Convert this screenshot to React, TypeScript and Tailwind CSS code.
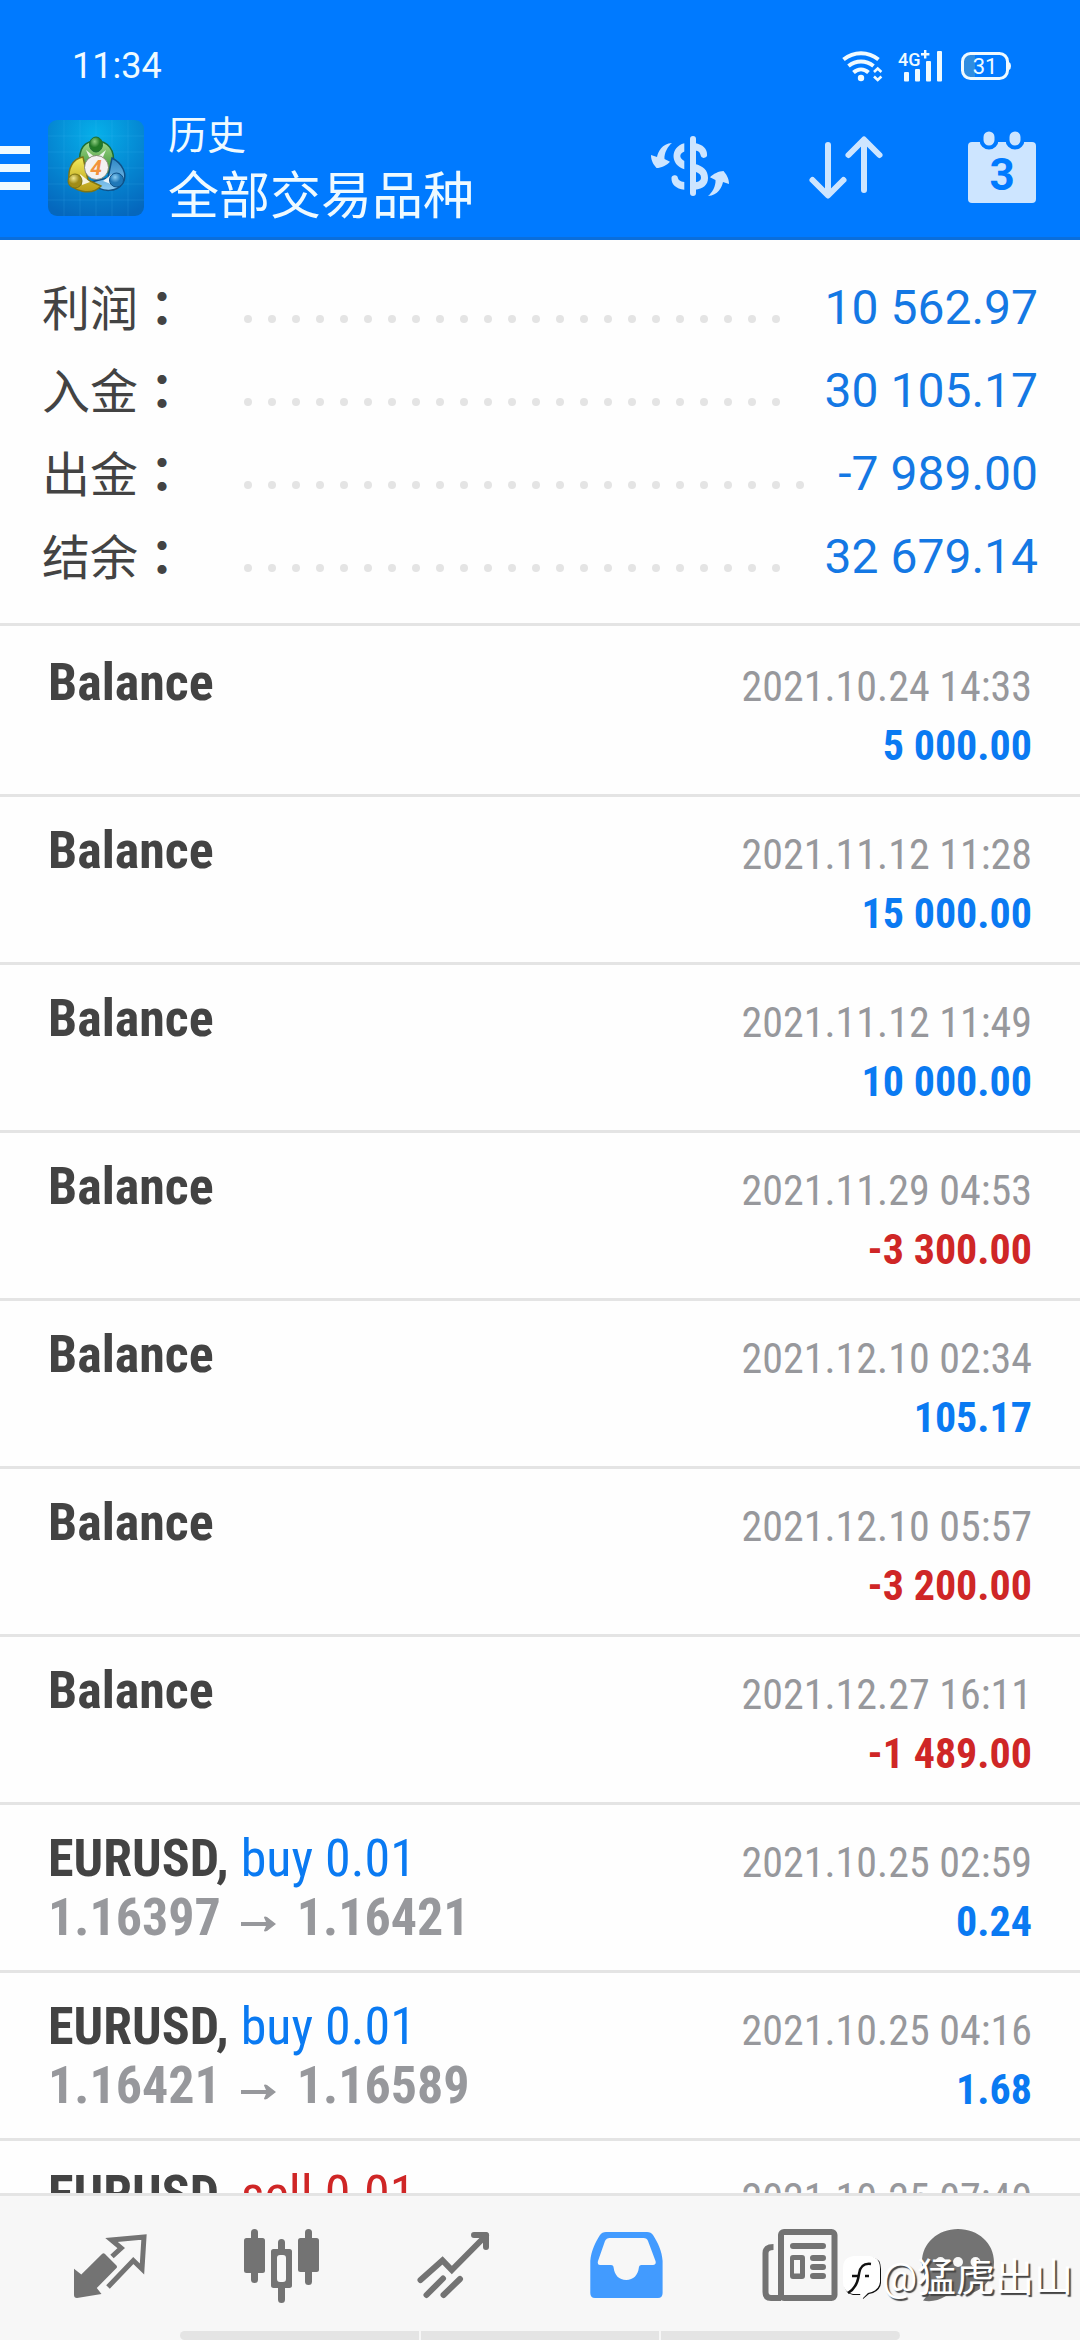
import type { ReactNode } from "react"
import clsx from "clsx"

type HistoryItem = {
  symbol: string
  side?: "buy" | "sell"
  volume?: string
  open?: string
  close?: string
  time: string
  amount: string
}

const summary = [
  { label: "利润", value: "10 562.97" },
  { label: "入金", value: "30 105.17" },
  { label: "出金", value: "-7 989.00" },
  { label: "结余", value: "32 679.14" },
]

const history: HistoryItem[] = [
  { symbol: "Balance", time: "2021.10.24 14:33", amount: "5 000.00" },
  { symbol: "Balance", time: "2021.11.12 11:28", amount: "15 000.00" },
  { symbol: "Balance", time: "2021.11.12 11:49", amount: "10 000.00" },
  { symbol: "Balance", time: "2021.11.29 04:53", amount: "-3 300.00" },
  { symbol: "Balance", time: "2021.12.10 02:34", amount: "105.17" },
  { symbol: "Balance", time: "2021.12.10 05:57", amount: "-3 200.00" },
  { symbol: "Balance", time: "2021.12.27 16:11", amount: "-1 489.00" },
  { symbol: "EURUSD", side: "buy", volume: "0.01", open: "1.16397", close: "1.16421", time: "2021.10.25 02:59", amount: "0.24" },
  { symbol: "EURUSD", side: "buy", volume: "0.01", open: "1.16421", close: "1.16589", time: "2021.10.25 04:16", amount: "1.68" },
  { symbol: "EURUSD", side: "sell", volume: "0.01", time: "2021.10.25 07:40", amount: "" },
]

const StatusBar = () => (
  <div className="flex h-[99px] items-center justify-between pt-[33px] pr-[69px] pl-[72px] text-[#effaff]">
    <span className="text-[36px] leading-none">11:34</span>
    <div className="flex items-center">
      <svg className="h-8 w-[42px]" viewBox="0 0 42 32" fill="none" stroke="currentColor" strokeWidth="4">
        <path d="M1.5 9.5C12 1 26 1 36.5 9.5" />
        <path d="M6.5 16C14 10 24 10 31.5 16" />
        <path d="M11.5 22.5C16 18.5 22 18.5 26.5 22.5" />
        <circle cx="19" cy="28" r="3.2" fill="currentColor" stroke="none" />
        <path d="M32 22L35.7 18.5L39.4 22M32 26.5L35.7 30L39.4 26.5" strokeWidth="2.6" />
      </svg>
      <svg className="ml-[14px] h-10 w-[45px]" viewBox="0 -4 45 40" fill="currentColor">
        <text x="0" y="15.500" fontSize="18" fontFamily="Roboto, sans-serif" fontWeight="500">4G</text>
        <path d="M26 0h2.4v3h3v2.4h-3v3H26v-3h-3V3h3z" />
        <rect x="6" y="22" width="5" height="9.5" rx="1" />
        <rect x="17" y="19" width="5" height="12.5" rx="1" />
        <rect x="28" y="11" width="5" height="20.5" rx="1" />
        <rect x="39" y="1" width="5" height="30.5" rx="1" />
      </svg>
      <svg className="ml-[18px] h-7 w-[50px]" viewBox="0 0 50 28">
        <path d="M9 2H14V26H9Q2 26 2 19V9Q2 2 9 2Z" fill="#2f8de0" />
        <rect x="1.5" y="1.5" width="45" height="25" rx="8" fill="none" stroke="currentColor" strokeWidth="3" />
        <path d="M48 10q2 1 2 4t-2 4z" fill="currentColor" />
        <text x="24" y="21.5" textAnchor="middle" fontSize="22" fontFamily="Roboto, sans-serif" fill="currentColor">31</text>
      </svg>
    </div>
  </div>
)

const AppLogo = () => (
  <svg className="h-24 w-24 shrink-0" viewBox="0 0 96 96">
    <defs>
      <radialGradient id="sky" cx=".5" cy=".15" r=".9">
        <stop offset="0" stopColor="#06b0ea" />
        <stop offset=".55" stopColor="#0587d2" />
        <stop offset="1" stopColor="#0567bd" />
      </radialGradient>
      <linearGradient id="green" x2="0" y2="1">
        <stop offset="0" stopColor="#a4d98b" />
        <stop offset="1" stopColor="#2f8c2c" />
      </linearGradient>
      <linearGradient id="yellow" x2="0" y2="1">
        <stop offset="0" stopColor="#f3ec5c" />
        <stop offset="1" stopColor="#b79b16" />
      </linearGradient>
      <linearGradient id="blue" x2="0" y2="1">
        <stop offset="0" stopColor="#2d86c4" />
        <stop offset="1" stopColor="#8ccbf2" />
      </linearGradient>
      <radialGradient id="greenHead" cx=".4" cy=".3">
        <stop offset="0" stopColor="#8fce80" />
        <stop offset=".8" stopColor="#237a26" />
      </radialGradient>
      <radialGradient id="yellowHead" cx=".4" cy=".3">
        <stop offset="0" stopColor="#f1e990" />
        <stop offset=".8" stopColor="#a08c18" />
      </radialGradient>
      <radialGradient id="blueHead" cx=".4" cy=".3">
        <stop offset="0" stopColor="#8ccdf2" />
        <stop offset=".8" stopColor="#1f78b8" />
      </radialGradient>
    </defs>
    <rect width="96" height="96" rx="9" fill="url(#sky)" />
    <path d="M16 0V96M32 0V96M48 0V96M64 0V96M80 0V96M0 16H96M0 32H96M0 48H96M0 64H96M0 80H96" stroke="#5fd0ff" strokeOpacity=".14" />
    <path d="M32 44C30 28 37 21 48 21S68 29 65 46L61 54L48 36L36 46Z" fill="url(#green)" stroke="#1d6d34" strokeWidth="1.5" />
    <path d="M64 38C74 43 80 54 75 63C69 72 54 74 43 62L60 58Z" fill="url(#blue)" stroke="#0f5187" strokeWidth="1.5" />
    <path d="M35 37C24 39 20 49 21 60C23 72 44 76 53 66L40 60Z" fill="url(#yellow)" stroke="#7d7414" strokeWidth="1.5" />
    <path d="M38 30L48 38L58 30L55 37H41ZM32 54L42 62L34 65ZM64 54L55 61L63 64Z" fill="#fff" fillOpacity=".85" />
    <ellipse cx="48" cy="24.500" rx="6.500" ry="7.500" fill="url(#greenHead)" stroke="#1d6d34" />
    <circle cx="27" cy="61" r="7" fill="url(#yellowHead)" stroke="#7d7414" />
    <circle cx="68.500" cy="60" r="7" fill="url(#blueHead)" stroke="#0f5187" />
    <circle cx="48.500" cy="47.500" r="12" fill="#f3f1f2" stroke="#776" strokeWidth=".8" />
    <text x="48" y="55" textAnchor="middle" fontSize="21" fontWeight="700" fontStyle="italic" fontFamily="Roboto, sans-serif" fill="#f2923c">4</text>
  </svg>
)

const CurrencyIcon = () => (
  <svg className="h-24 w-24" viewBox="0 0 96 96" fill="currentColor">
    <path d="M51 19V73" stroke="currentColor" strokeWidth="6" strokeLinecap="round" />
    <path d="M42.300 23.300C28 27 28 45 42.300 49.300V41C37 38 37 34 42.300 31.500Z" />
    <path d="M29.500 59a3.200 3.200 0 0 1 6.400-1C36.500 60 38 61.500 42.300 62V69.700C34 69 29.500 64 29.500 59Z" />
    <path d="M53 23C61 24.500 65 29 65 34a3.200 3.200 0 0 1-6.400 1.200C58 32.500 57 31 53 30.500Z" />
    <path d="M53 44C61 46 66 50 66 58C66 65 61 69 53 69.700V62.500C57.500 61.500 59 60 59 57.500C59 54.500 57 53 53 51.500Z" />
    <path d="M30 23C20 23.500 16 32 15 37L9 35C9 41 12 45 14.500 48C19 48 25 45 28 41.700L22.500 39C22 33 26 26 30 23Z" />
    <path d="M30 23C20 23.500 16 32 15 37L9 35C9 41 12 45 14.500 48C19 48 25 45 28 41.700L22.500 39C22 33 26 26 30 23Z" transform="rotate(180 48 49.500)" />
  </svg>
)

const SortIcon = () => (
  <svg className="h-24 w-24" viewBox="0 0 96 96" fill="none" stroke="currentColor" strokeWidth="6" strokeLinecap="round" strokeLinejoin="round">
    <path d="M30 25V74.500M14.500 60L30 75.500L45.500 60" />
    <path d="M66 70V20M50.500 35L66 19.500L81.500 35" />
  </svg>
)

const CalendarIcon = () => (
  <svg className="h-24 w-24" viewBox="0 0 96 96">
    <rect x="14" y="22" width="68" height="61" rx="4" fill="#cde5ff" />
    <g fill="#cde5ff" stroke="#007aff" strokeWidth="4">
      <rect x="27.500" y="9.500" width="15" height="18" rx="7.500" />
      <rect x="53.500" y="9.500" width="15" height="18" rx="7.500" />
    </g>
    <text x="48" y="70" textAnchor="middle" fontSize="44" fontWeight="700" fontFamily="Roboto, sans-serif" fill="#007aff">3</text>
  </svg>
)

const Header = () => (
  <header className="shrink-0 border-b-[3px] border-[#0a6edb] bg-[#007aff]">
    <StatusBar />
    <div className="flex h-[138px] items-center">
      <button aria-label="菜单" className="flex h-24 w-12 flex-col justify-center gap-[10px]">
        <span className="h-2 w-[30px] bg-[#effaff]" />
        <span className="h-2 w-[30px] bg-[#effaff]" />
        <span className="h-2 w-[30px] bg-[#effaff]" />
      </button>
      <AppLogo />
      <div className="ml-6 flex-1 pt-1 text-[#effaff]">
        <p className="text-[39px] leading-[54px]">历史</p>
        <h1 className="text-[51px] leading-[68px]">全部交易品种</h1>
      </div>
      <div className="flex text-[#cde5ff]">
        <button aria-label="货币" className="flex w-[156px] justify-center"><CurrencyIcon /></button>
        <button aria-label="排序" className="flex w-[156px] justify-center"><SortIcon /></button>
        <button aria-label="日期" className="flex w-[156px] justify-center"><CalendarIcon /></button>
      </div>
    </div>
  </header>
)

const SummaryRow = ({ label, value }: { label: string; value: string }) => (
  <div className="flex h-[83px] items-center text-[48px]">
    <dt className="w-[194px] shrink-0 leading-[79px] text-[#434343] self-start">
      {label}
      <span className="font-['Noto_Sans_CJK_TC',sans-serif] font-bold" lang="zh-TW">：</span>
    </dt>
    {/* leader dots: whatever does not fit wraps to a hidden line */}
    <div aria-hidden="true" className="mr-5 mb-[26px] flex h-2 flex-1 flex-wrap self-end overflow-hidden">
      {Array.from({ length: 60 }, (_, i) => (
        <span key={i} className="mx-2 size-2 rounded-full bg-[#e4e4e4]" />
      ))}
    </div>
    <dd className="text-[#1478e4]">{value}</dd>
  </div>
)

const HistoryRow = ({ item }: { item: HistoryItem }) => (
  <li className="flex h-[168px] justify-between border-b-[3px] border-[#e4e4e4] px-12 font-['Roboto_Condensed','Liberation_Sans_Narrow',Roboto,sans-serif] leading-[59px]">
    <div className="pt-6 text-[52px]">
      <p className="font-bold text-[#434343]">
        {item.symbol}
        {item.side && (
          <>
            ,{" "}
            <span className={clsx("font-normal", item.side === "buy" ? "text-[#0a7af2]" : "text-[#cf2626]")}>
              {item.side} {item.volume}
            </span>
          </>
        )}
      </p>
      {item.open && (
        <p className="flex items-center font-bold text-[#97989c]">
          {item.open}
          <svg className="mx-5 mt-3 h-4 w-9" viewBox="0 0 36 16" fill="currentColor" role="img" aria-label="至">
            <path d="M0 6H25L23 1.500Q23 0 26 1L35 8L26 15Q23 16 23 14.500L25 10H0Z" />
          </svg>
          {item.close}
        </p>
      )}
    </div>
    <div className="pt-7 text-right text-[42px]">
      <p className="text-[#97989c]">{item.time}</p>
      <p className={clsx("font-bold", item.amount.startsWith("-") ? "text-[#cf2626]" : "text-[#0a7af2]")}>{item.amount}</p>
    </div>
  </li>
)

const NavButton = ({ label, active, children }: { label: string; active?: boolean; children: ReactNode }) => (
  <button
    aria-label={label}
    aria-current={active ? "page" : undefined}
    className={clsx("flex flex-1 justify-center", active ? "text-[#429bff]" : "text-[#737373]")}
  >
    <svg className="h-24 w-24" viewBox="0 0 96 96" fill="currentColor">{children}</svg>
  </button>
)

const BottomNav = () => (
  <nav className="shrink-0 border-t-[3px] border-[#e4e4e4] bg-[#f7f7f7]">
    <div className="flex px-6 pt-[21px] pb-[18px]">
      <NavButton label="行情">
        <path d="M12 51.700L19.300 57.500L40 37Q41.500 35.500 43 37L54.500 48.500Q55.500 50 54.500 51L34.800 71L39.500 77L15 81Q12 81 12 78Z" />
        <path d="M50 39.500L59.200 31L49.500 23L82 20L80 52L71.300 43.500L46 70" fill="none" stroke="currentColor" strokeWidth="5" />
      </NavButton>
      <NavButton label="图表">
        <rect x="10" y="21" width="21" height="35" rx="2.500" />
        <rect x="17" y="12" width="7" height="54" rx="3.500" />
        <path fillRule="evenodd" d="M39.500 32H55.500Q58 32 58 34.500V68.500Q58 71 55.500 71H39.500Q37 71 37 68.500V34.500Q37 32 39.500 32ZM46 38Q43 38 43 41V62Q43 65 46 65H49Q52 65 52 62V41Q52 38 49 38Z" />
        <path d="M44 33V25.500a3.500 3.500 0 0 1 7 0V33ZM44 70V82.500a3.500 3.500 0 0 0 7 0V70Z" />
        <rect x="64" y="21" width="21" height="34" rx="2.500" />
        <rect x="71" y="12" width="7" height="56" rx="3.500" />
      </NavButton>
      <NavButton label="交易">
        <g fill="none" stroke="currentColor" strokeWidth="6" strokeLinecap="round" strokeLinejoin="round">
          <path d="M14.500 63L36.500 43.500L45.800 53L80 18.500" strokeLinejoin="miter" />
          <path d="M68 18H80V30" />
          <path d="M37 61.500L20.500 78M54 62L37.500 78" />
        </g>
      </NavButton>
      <NavButton label="历史" active>
        <path fillRule="evenodd" d="M12.300 44C13 34 18 24 22 18Q24 15 28 15H69Q73 15 75 18C80 26 84 34 84.600 44V76Q84.600 81 80 81H17Q12.300 81 12.300 76ZM31.500 21Q28.500 21 27 24L20 44Q19 48 22 48H33Q35.500 48 35.700 51C36.500 58 41 63 48.200 63S60 58 60.800 51Q61 48 63.500 48H75Q78.500 48 77.500 44L70 24Q69 21 65.500 21Z" />
      </NavButton>
      <NavButton label="新闻">
        <g fill="none" stroke="currentColor" strokeWidth="6">
          <rect x="31" y="15" width="53.500" height="66" rx="3" />
          <path d="M23.500 30Q15.500 30 15.500 36V75Q15.500 81 21 81H31" />
          <path d="M43 29H73M63 41H73M63 50H73M63 59H73" strokeLinecap="round" />
        </g>
        <path fillRule="evenodd" d="M43 38H52Q55 38 55 41V59Q55 62 52 62H43Q40 62 40 59V41Q40 38 43 38ZM44 43V56.500H50V43Z" />
      </NavButton>
      <NavButton label="消息">
        <path d="M36 12C56 12 72 26 72 45S57 78 38 78C31 78 28 77 24 79C16 84 8 85 1 83.500C6 78 9 73 8 68C3 62 0 54 0 45C0 26 16 12 36 12Z" />
        <g fill="#f7f7f7">
          <circle cx="18.500" cy="45" r="5" />
          <circle cx="36" cy="45" r="5" />
          <circle cx="53.500" cy="45" r="5" />
        </g>
      </NavButton>
    </div>
    <div className="mx-auto flex h-[9px] w-2/3 gap-[2px] overflow-hidden rounded-full">
      <span className="flex-1 bg-[#e4e4e4]" />
      <span className="flex-1 bg-[#e4e4e4]" />
      <span className="flex-1 bg-[#e4e4e4]" />
    </div>
  </nav>
)

const Watermark = () => (
  <div className="pointer-events-none absolute right-[7px] bottom-[38px] flex items-center text-white">
    <svg className="h-11 w-[39px]" viewBox="0 0 39 44">
      <path d="M12 1H28Q38 2 38 13V27Q37 36 26 38L20 43L19 39H10Q1 37 1 27V13Q1 2 12 1Z" fill="#111" />
      <path d="M11 0H26Q37 1 37 12V26Q36 35 25 37L19 43L17 38H10Q0 36 0 26V12Q0 1 11 0Z" fill="#fff" />
      <path d="M28 8C20 7 17 11 16 18C15 26 12 33 5 37M9 20H16M22 20H26" fill="none" stroke="#111" strokeWidth="2.500" />
    </svg>
    <span className="text-[39px] leading-[48px] [text-shadow:2px_2px_1px_#444]">@猛虎出山</span>
  </div>
)

const App = () => (
  <div className="relative flex h-screen flex-col overflow-hidden bg-[#fefefe] font-[Roboto,'Noto_Sans_CJK_SC',sans-serif]" lang="zh-CN">
    <Header />
    <main className="min-h-0 flex-1 overflow-y-auto [scrollbar-width:none]">
      <dl className="border-b-[3px] border-[#e4e4e4] pt-[26px] pr-[42px] pb-[25px] pl-[42px]">
        {summary.map((row) => (
          <SummaryRow key={row.label} {...row} />
        ))}
      </dl>
      <ul className="pt-[3px]">
        {history.map((item) => (
          <HistoryRow key={item.time} item={item} />
        ))}
      </ul>
    </main>
    <BottomNav />
    <Watermark />
  </div>
)

export default App
